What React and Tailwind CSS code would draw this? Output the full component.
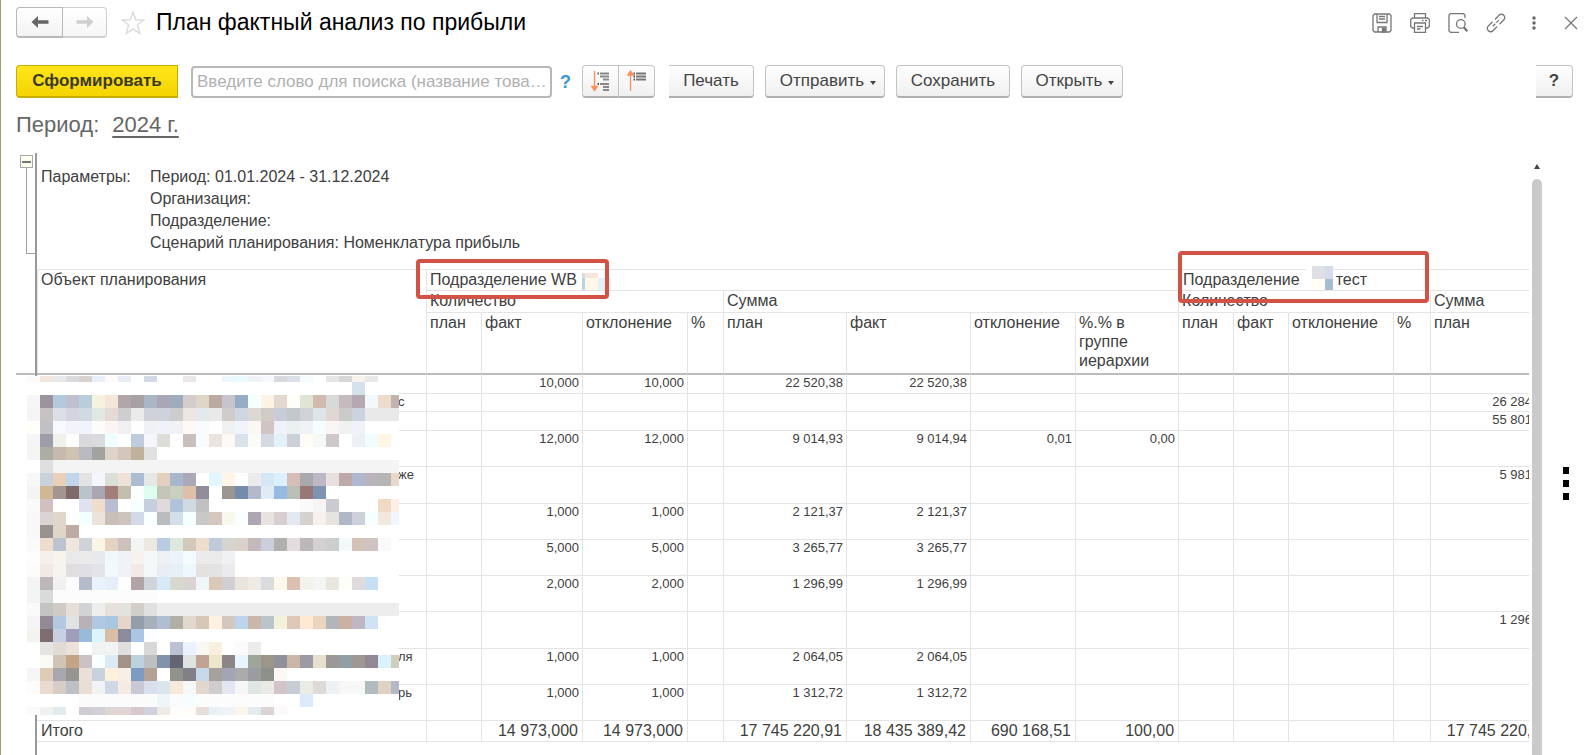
import React from "react";

const columns = [389, 55, 101, 105, 36, 123, 124, 105, 103, 55, 55, 105, 37, 123];

const rows = [
  { h: 20, label: "", cells: ["", "10,000", "10,000", "", "22 520,38", "22 520,38"] },
  { h: 18, label: "с", last: "26 284,00" },
  { h: 19, label: "", last: "55 801,00" },
  { h: 36, label: "", cells: ["", "12,000", "12,000", "", "9 014,93", "9 014,94", "0,01", "0,00"] },
  { h: 37, label: "же", last: "5 981,00" },
  { h: 36, label: "", cells: ["", "1,000", "1,000", "", "2 121,37", "2 121,37"] },
  { h: 36, label: "", cells: ["", "5,000", "5,000", "", "3 265,77", "3 265,77"] },
  { h: 36, label: "", cells: ["", "2,000", "2,000", "", "1 296,99", "1 296,99"] },
  { h: 37, label: "", last: "1 296,99" },
  { h: 36, label: "ля", cells: ["", "1,000", "1,000", "", "2 064,05", "2 064,05"] },
  { h: 36, label: "рь", cells: ["", "1,000", "1,000", "", "1 312,72", "1 312,72"] },
];

const totals = [
  "", "14 973,000", "14 973,000", "", "17 745 220,91", "18 435 389,42",
  "690 168,51", "100,00", "", "", "", "", "17 745 220,91",
];

// one string per row of 13px squares, "." is an empty square, "x*n" repeats a colour
const mosaic = [
  "fbfbfb f3e5db e6e9ec d9dadb dad2cf e8f1f9 fdfaf8 e8edf6 fbfdfe d2d8e6 . . ebe6e8 . . edf5fd ebfaff f1f2f4 f5f7fc d7d9dc dcdfe7 f6fcfd . e7e5e8 d6d6d6 f8f2ea e9e8ea",
  ".*25 d6e1ee",
  "f6f6f6 9c949c b2c9de c0bfcd b9cddb f5f2dd f5e6da b3a6aa a7a1a5 a9b6c5 a9a7b5 9eacbc d5cdcb dfd6c8 baaaa2 c7c4cc 95acc4 f5ffff fcf3e5 e4d9d0 fefef9 e0e4d4 d1baae d8dad9 c5babd b5a8b3 f3f9fa eddccb c2b2ae",
  "f5f5f5 c6c2c1 dcdfe6 d3d4df d1d9e2 e2e9e4 e4dbd5 cecdd1 ebebec cfd2da cfd2da cdcdcd ebe6e1 e2e8eb e9e9ea d1cbcb ced6e0 dcd8d2 d2ccc7 c8ccd8 c3c9cb d2d3d8 dce5e8 e0d7d2 cbcbca cbd3df e9e9e9*3",
  "fefefb c2c0c7 f8f9fd f3f3fa f1f4fc fcfdfa fbf6f3 f0f0f2 fefefe f0f1f4 f0f2f9 f0f2f5 fdfaf5 fafbfe . f0f0f1 f1f4fa fbf8f3 d0c4c4 eff2f8 ebf0f1 f1f2f5 f6fdff faf6f3 f0f1f1 eff3f9",
  "f5f5f5 9d9ea9 f1f1ec fdfdfd d8d8dd d9dbdc f0ffff . bfccde f4f6fb dfddd7 . c9bfbf fafbff eae4e1 fff9f5 dae2ea fbfcf6 d5d9e2 e2f2f8 ccd1d9 fefcf7 f6f8f7 cec8cb . edf1f5 f1fcff fff7e4",
  "f5f5f5 acaea6 c8b9ae d1c3b1 b9bac0 a2a2a1 dfd3c8 d2c6bd c0b19c e1e1e1",
  ". dfdfe0 f4f4f4*27",
  "f8f8f8 c7d2db ebd0b9 c1d5eb e3e3e4 f3f6fd dadfd7 eee1d5 acbcd3 e5e8e7 e5d0bf a8b6ce aba8b7 . e2f6ff fff4e7 fdfdfd ebebeb d5e6f6 dbf1ff d6beb7 a8a9ac bdb8c6 e9dfe0 bda9a9 afb8d0 bab3b9 b5b5b4 ead8cb",
  "f4f4f2 d2b795 a3958f 806969 bac2cc aaa5b3 a37e78 c5beaf fbfffd dcfff1 c4c4b8 c9d0bf debfaa 918d9b . 9b9592 758bae b3b8ca e1ebf6 96bbe2 b9c0b7 997776 7e93b1",
  "fafafa d0c0c2 . . e0e2ef f0dcca b8bdd2 . f4fffe c7cedf e0dada b1c2db cfdae1 c1c1c1 .*7 fafafa f7f5f4 cbcad0 .*3 f0dac6 fdefe2",
  "f9f7f7 dad2d3 e0d6c9 fdfefb f3ffff ece4db c9bfba cdc5bd d1dae6 f9feff bcbcbf d4dfec f6ffff c8c8c8 d5c8bf f8f8ef f9ffff aea7b3 e7e4df dacfd0 e4e8f1 d3d2ce f6f1ed e6e4df b0b7c6 ced1dc f5ffff f3e8dc eff6fd",
  "f8f8f8 98938f dfd6c8 bdaca3",
  "fafafa ecddcf bcc4d1 f1e6de ced3da f9f6e8 e5d2c0 cdc1be f2f5f4 ede9e1 b9cce1 dee8df d3c9ba eedccd bfcada d6d5d0 dad2c9 c4babc cbcedd b2b0af e3dcdd bcb7ba d5d1d2 cccecd f3f9f8 d5c2b6 cfc3c4 fafafa",
  "fdfdfd f5f0ed f7f4ee e9e9ea ebebec e8e9ec f1f8fb f0f2f6 f7f2ee f5f8f8 eef0f5 edf3fa f3fbfe ebebeb ebebeb f0f1f3",
  "fcfcfc f3e9e4 f7f3ee e1dee0 e0e0e4 e4e3e7 f2f8fb f0f2f7 f3eae5 f5f8f8 ebedf4 e7f0f7 edf8fd e5e1df e4e3e4 ebeaef",
  "f4f4f5 bcb8b9 f0f1f0 fcfcfe b6bbcc eaf3fc e6eef8 . b0a4a7 cfd4db d8eaf8 d5d9cf dad3d1 eff6f9 dbc9b8 d0cfd5 ebe5dd f0ebe5 d9dbdd fdf8ec dcc0b0 f4f2ec f5f5f5 eae6e0 fdfef8 e0dbdc c7dff4",
  "f3f5f4 d8dbd9 fcfcfc*8",
  "fafafa c4c4c2 cecac6 e6dfd8 d1d3d7 ecefed e6e1dd e2e2df d2cfc9 e0e0e0 ededed*19",
  "f5f4f6 948a97 b4c9e0 e0e3e3 b8b2b8 b0c8e3 aac7e2 e5d5cb 929faa a8b0b9 b0bed1 b2b0a6 e2d8cd d6c7b6 fff1e1 d3c8bf bcd4ec cab6aa bbc3cd f3f1da dfc7b7 ffe9d2 ecd5c0 b0b6ba cbb1a4 bdb7c3 d0e3f4",
  "f3f3f0 7c6d70 c9d0e3 a09fbb 9abad9 ddf4ff dabda5 8b8b9c a9c6e5 fafeff",
  ". e4e4e3 e2dad4 ede2db . f0f3f1 f1f4f2 dfdfe0 . d8d8d9 . bbc1d2 eaf3fd fbf8f3 f7f0e0 . fbfbfd ececec",
  ". fbf9f4 cfc5b5 c3a585 ccc1c3 f9ffff dceaf6 a39288 bdd2df bfbfbf 8193aa 656472 dfe3e3 c1a396 ede6cb 8b8588 e8f5fc a0a59b 9b9689 90919b cbb6a5 9b9aa5 e8e0ce 9c9895 919fa5 a09793 928993 daf2fd d0cebc",
  "f6f6f6 dfccb7 aaa6b0 969592 ecdfd7 c8d2dc fff0dd f7efe3 7b9bc0 b4a296 . 90928c 827f87 c8d8eb a7a19e a3a5b6 aaabaa 9a9c9f 8d918b fbf8f6",
  "fdfcfa eadacf d8ccc6 bfbfc6 eadfd7 f1f2f3 cfd8e4 f4ece4 c9c8d7 dadfed dae6ec f7e8dc f7f8f8 e4d7cd d0cccd e3e6f0 f6f6f6 dee7e3 eaeae7 d2c4c9 c8ccd6 ebece2 dedad9 ebf1f5 f7f7f7 f7f7f7 b1bbbd dfd1c4 b5b8c6",
  ".*4 fbfbfb*6 f0f5f9 fbfbfb f7fcfe fcfcfc*6 . . dbeafa",
  "fafafa f0f2f2 e2ebef . cfcdd1 d3cfd9 dfd5d5 dfd5d5 d4c9cc d0d2e0 efebe4 fdfdfd fffcf7 e7ddd9 e8f2f8 eef3f7 fcf6eb e2ebef dcd3d6 fbf9f9",
];

const expand = (line) =>
  line.split(" ").flatMap((part) => {
    const [color, count] = part.split("*");
    return Array(Number(count || 1)).fill(color);
  });

const Mosaic = () => (
  <svg
    className="absolute left-[11px] top-[223px] z-10"
    width="372"
    height="339"
    viewBox="0 7 372 339"
    shapeRendering="crispEdges"
    aria-hidden="true"
  >
    <rect x="0" y="7" width="372" height="339" fill="#fff" />
    {mosaic.map((line, r) =>
      expand(line).map((color, c) =>
        color === "." ? null : (
          <rect key={`${r}-${c}`} x={c * 13} y={r * 13} width="13" height="13" fill={`#${color}`} />
        )
      )
    )}
  </svg>
);

const Arrow = ({ flip, color }) => (
  <svg width="18" height="14" viewBox="0 0 18 14" className={flip ? "rotate-180" : ""}>
    <path d="M0.5 7 7 1v4.2h10.5v3.6H7V13z" fill={color} />
  </svg>
);

const Caret = () => (
  <svg width="6" height="4" viewBox="0 0 6 4" className="mt-1 ml-1.5">
    <path d="M0 0h6L3 4z" fill="#444" />
  </svg>
);

const iconProps = {
  width: 20,
  height: 20,
  viewBox: "0 0 20 20",
  fill: "none",
  stroke: "#777",
  strokeWidth: 1.3,
};

const SaveIcon = () => (
  <svg {...iconProps}>
    <path d="M2.5 1h15L19 2.5v15L17.5 19h-15L1 17.5v-15z" />
    <path d="M5 1v8.500h10V1M7 3.500h6M7 6h6" />
    <path d="M6 19v-5h8v5" />
    <path d="M10.5 15.500h2.500V19h-2.500z" fill="#777" />
  </svg>
);

const PrintIcon = () => (
  <svg {...iconProps}>
    <path d="M4.5 5V.7h11V5" />
    <path d="M4.5 15h-2L.7 13.500v-7L2.500 5h15l1.800 1.500v7L17.500 15h-2" />
    <path d="M4.5 10h11v9.300h-11zM7 13.500h6M7 16h3.500" />
    <path d="M12 7.500h1.500M15 7.500h2" />
  </svg>
);

const PreviewIcon = () => (
  <svg {...iconProps}>
    <path d="M17 5V2L15.500.700h-13L1 2v16l1.500 1.300H11" />
    <circle cx="12.8" cy="11" r="4.3" />
    <path d="m15.800 14.300 3.500 4" strokeWidth="2.4" />
  </svg>
);

const LinkIcon = () => (
  <svg {...iconProps}>
    <path d="M9 6.500 13 2.300a3.200 3.200 0 0 1 4.700 0 3.200 3.200 0 0 1 0 4.700L13.500 11.200" />
    <path d="M11 13.500 7 17.700a3.200 3.200 0 0 1-4.700 0 3.200 3.200 0 0 1 0-4.700L6.500 8.800" />
    <path d="m6.800 13.200 6.400-6.400" strokeDasharray="3.5 1.5" />
  </svg>
);

const toolButton =
  "h-[33px] flex items-center justify-center border border-[#c4c4c4] border-b-2 border-b-[#b0b0b0] rounded-sm bg-gradient-to-b from-white to-[#f0f0f0] text-[#444]";

const Header = () => (
  <header className="flex items-center h-[31px] mt-[7px] pl-[15px] pr-[13px]">
    <div className="flex">
      <button aria-label="Назад" className="w-[47px] h-[31px] flex items-center justify-center border border-[#b8b8b8] border-b-2 rounded-l-sm bg-gradient-to-b from-white to-[#f3f3f3]">
        <Arrow color="#666" />
      </button>
      <button aria-label="Вперед" className="w-[44px] h-[31px] flex items-center justify-center border border-l-0 border-[#d0d0d0] border-b-2 rounded-r-sm bg-gradient-to-b from-white to-[#f6f6f6]">
        <Arrow flip color="#d0d0d0" />
      </button>
    </div>
    <button aria-label="В избранное" className="ml-[14px]">
      <svg width="24" height="26" viewBox="0 0 24 26" fill="none" stroke="#dcdcdc" strokeWidth="1.5">
        <path d="m12 2 2.800 7.800 8 .2-6.400 5 2.300 8.500L12 18.800l-6.700 4.700L7.600 15 1.200 10l8-.2z" />
      </svg>
    </button>
    <h1 className="ml-[11px] text-[23px] leading-[31px] text-black whitespace-nowrap">
      План фактный анализ по прибыли
    </h1>
    <div className="ml-auto flex items-center gap-[18px]">
      <button aria-label="Сохранить"><SaveIcon /></button>
      <button aria-label="Печать"><PrintIcon /></button>
      <button aria-label="Просмотр"><PreviewIcon /></button>
      <button aria-label="Ссылка"><LinkIcon /></button>
      <button aria-label="Еще" className="w-5 flex justify-center">
        <svg width="4" height="14" viewBox="0 0 4 14" fill="#666">
          <circle cx="2" cy="2" r="1.7" />
          <circle cx="2" cy="7" r="1.7" />
          <circle cx="2" cy="12" r="1.7" />
        </svg>
      </button>
      <button aria-label="Закрыть" className="ml-0.5">
        <svg width="14" height="14" viewBox="0 0 14 14" stroke="#777" strokeWidth="1.3">
          <path d="m1 1 12 12M13 1 1 13" />
        </svg>
      </button>
    </div>
  </header>
);

const Toolbar = () => (
  <div className="flex items-center mt-[27px] pl-[15px] pr-[18px] text-[17px]">
    <button className="w-[162px] h-[33px] border border-[#c8ae00] border-b-2 rounded-l-sm bg-gradient-to-b from-[#ffe61a] to-[#f5d400] font-bold text-[#3a3a2a]">
      Сформировать
    </button>
    <input
      type="text"
      aria-label="Поиск"
      placeholder="Введите слово для поиска (название това…"
      className="ml-[13px] w-[361px] h-8 px-1 border-2 border-[#b8b8b8] rounded text-[#444] placeholder:text-[#b0b0b0]"
    />
    <button aria-label="Справка по поиску" className="ml-2 w-[10px] text-lg font-bold text-[#3f96d0]">?</button>
    <div className="flex ml-[12px]">
      <button aria-label="Развернуть группы" className={`${toolButton} w-9 rounded-r-none border-r-0`}>
        <svg width="20" height="22" viewBox="0 0 20 22">
          <path d="M3.500 1v19M.7 16.500l2.800 4 2.800-4z" stroke="#ff8f5a" strokeWidth="1.3" fill="#ff8f5a" />
          <path d="M9 3.500h9M9 6.500h9M12 9.500h6M9 14h9M12 17h6M12 20h6" stroke="#888" strokeWidth="2" />
          <path d="M6.500 3.500H8M6.500 14H8" stroke="#555" strokeWidth="2" />
        </svg>
      </button>
      <button aria-label="Свернуть группы" className={`${toolButton} w-[37px] rounded-l-none`}>
        <svg width="20" height="22" viewBox="0 0 20 22">
          <path d="M3.500 21V2M.7 5l2.800-4 2.800 4z" stroke="#ff8f5a" strokeWidth="1.3" fill="#ff8f5a" />
          <path d="M9 3.500h10M9 6.500h10M9 9.500h10" stroke="#777" strokeWidth="2" />
          <path d="M6.500 3.500H8M6.500 6.500H8M6.500 9.500H8" stroke="#555" strokeWidth="2" />
        </svg>
      </button>
    </div>
    <div className="flex gap-[11px] ml-[14px]">
      <button className={`${toolButton} w-[85px] rounded-l-none border-l-0`}>Печать</button>
      <button className={`${toolButton} w-[120px] pl-1.5`}>Отправить <Caret /></button>
      <button className={`${toolButton} w-[114px]`}>Сохранить</button>
      <button className={`${toolButton} w-[102px] pl-1.5`}>Открыть <Caret /></button>
    </div>
    <button aria-label="Справка" className={`${toolButton} ml-auto w-[37px] rounded-l-none border-l-0 font-bold`}>?</button>
  </div>
);

const Th = ({ children, className = "pl-[3px]", ...rest }) => (
  <th
    className={`relative align-top text-left font-normal leading-[19px] pr-2 border-t border-l border-[#e4e4e4] ${className}`}
    {...rest}
  >
    {children}
  </th>
);

const ReportTable = () => (
  <table className="table-fixed w-[1516px] border-separate border-spacing-0 text-base text-[#404040]">
    <colgroup>
      {columns.map((width, index) => (
        <col key={index} style={{ width }} />
      ))}
    </colgroup>
    <thead>
      <tr className="h-[21px]">
        <Th rowSpan={3} className="pl-[3px]">Объект планирования</Th>
        <Th colSpan={8}>
          Подразделение WB
          <span className="absolute -left-[11px] -top-[11px] z-20 w-[193px] h-10 border-4 border-[#d25245] rounded-sm" />
          <svg className="absolute left-[155px] top-[3px]" width="29" height="17" viewBox="0 0 29 17" shapeRendering="crispEdges">
            <path d="M0 0h3v5H0z" fill="#d8dce6" />
            <path d="M3 0h13v5H3z" fill="#f5e6dc" />
            <path d="M0 5h3v12H0z" fill="#b9d3e6" />
            <path d="M3 5h13v12H3z" fill="#fff8e9" />
            <path d="M16 5h13v12H16z" fill="#e3f0fa" />
          </svg>
        </Th>
        <Th colSpan={5} className="border-l-0 pl-[5px]">
          Подразделение
          <span className="absolute left-0 -top-[19px] z-20 w-[251px] h-[52px] border-4 border-[#d25245] rounded-sm" />
          <svg className="absolute left-[128px] -top-1" width="27" height="25" viewBox="0 0 27 25" shapeRendering="crispEdges">
            <path d="M0 0h27v25H0z" fill="#fff" />
            <path d="M6 0h13v13H6z" fill="#dfe0e6" />
            <path d="M19 0h8v13h-8z" fill="#d5dce9" />
            <path d="M6 13h13v12H6z" fill="#fffff5" />
            <path d="M19 13h8v12h-8z" fill="#a6bccf" />
          </svg>
          <span className="ml-[36px]">тест</span>
        </Th>
      </tr>
      <tr className="h-[22px]">
        <Th colSpan={4}>Количество</Th>
        <Th colSpan={4}>Сумма</Th>
        <Th colSpan={4}>Количество</Th>
        <Th>Сумма</Th>
      </tr>
      <tr className="h-[61px]">
        {["план", "факт", "отклонение", "%", "план", "факт", "отклонение", "%.% в группе иерархии", "план", "факт", "отклонение", "%", "план"].map(
          (title, index) => (
            <Th key={index}>{title}</Th>
          )
        )}
      </tr>
    </thead>
    <tbody>
      {rows.map((row, index) => {
        const line = index === 0 ? "border-t-2 border-t-[#bdbdbd]" : "border-t";
        return (
          <tr key={index} style={{ height: row.h }} className="text-[13px] leading-[15px] align-top">
            <td className={`${line} border-[#e4e4e4] pl-[361px]`}>{row.label}</td>
            {totals.map((_, i) => (
              <td key={i} className={`${line} border-l border-[#e4e4e4] pr-[3px] text-right whitespace-nowrap`}>
                {i === 12 ? row.last : row.cells?.[i]}
              </td>
            ))}
          </tr>
        );
      })}
      <tr className="h-[22px] leading-[19px] align-top">
        <td className="border-y border-[#e4e4e4] pl-1">Итого</td>
        {totals.map((value, i) => (
          <td key={i} className="border-y border-l border-[#e4e4e4] pr-1 text-right whitespace-nowrap">
            {value}
          </td>
        ))}
      </tr>
    </tbody>
  </table>
);

const Report = () => (
  <main className="relative flex flex-1 mt-[15px] ml-[15px]">
    {/* group outline gutter */}
    <div className="w-[19px] shrink-0">
      <div className="h-[222px] border-b-2 border-[#bdbdbd] pt-0.5 pl-1">
        <button aria-label="Свернуть" className="w-[13px] h-[13px] flex items-center justify-center border border-[#aaa] bg-[#fffff0]">
          <span className="w-[9px] h-0.5 bg-[#777]" />
        </button>
        <div className="ml-1.5 h-[86px] border-l border-b border-[#a0a0a0]" />
      </div>
    </div>
    <Mosaic />
    <div className="flex-1 min-w-0 overflow-hidden border-l-2 border-[#999]">
      <div className="flex h-[116px] pt-[13px] pl-1 text-base leading-[22px] text-[#404040]">
        <div className="w-[109px]">Параметры:</div>
        <div>
          <p>Период: 01.01.2024 - 31.12.2024</p>
          <p>Организация:</p>
          <p>Подразделение:</p>
          <p>Сценарий планирования: Номенклатура прибыль</p>
        </div>
      </div>
      <ReportTable />
    </div>
    <div className="w-[62px] shrink-0 flex">
      <div className="ml-[3px] w-[10px] flex flex-col items-center pt-[11px]">
        <svg width="6" height="5" viewBox="0 0 6 5">
          <path d="M3 0 6 5H0z" fill="#444" />
        </svg>
        <div className="mt-[10px] w-full flex-1 rounded-t-full bg-[#cacaca]" />
      </div>
      <button aria-label="Меню" className="ml-[21px] mt-[314px] self-start flex flex-col gap-[6px]">
        <span className="w-[6px] h-[7px] bg-black" />
        <span className="w-[6px] h-[7px] bg-black" />
        <span className="w-[6px] h-[7px] bg-black" />
      </button>
    </div>
  </main>
);

const App = () => {
  return (
    <div className="min-h-screen flex flex-col bg-white border-l border-[#a89d74] font-['Liberation_Sans',Arial,sans-serif]">
      <Header />
      <Toolbar />
      <div className="flex items-center mt-[13px] pl-[15px] h-[27px] text-[22px] text-[#666]">
        Период:
        <a href="#period" className="ml-[13px] underline decoration-2 underline-offset-4">2024 г.</a>
      </div>
      <Report />
    </div>
  );
};

export default App;
